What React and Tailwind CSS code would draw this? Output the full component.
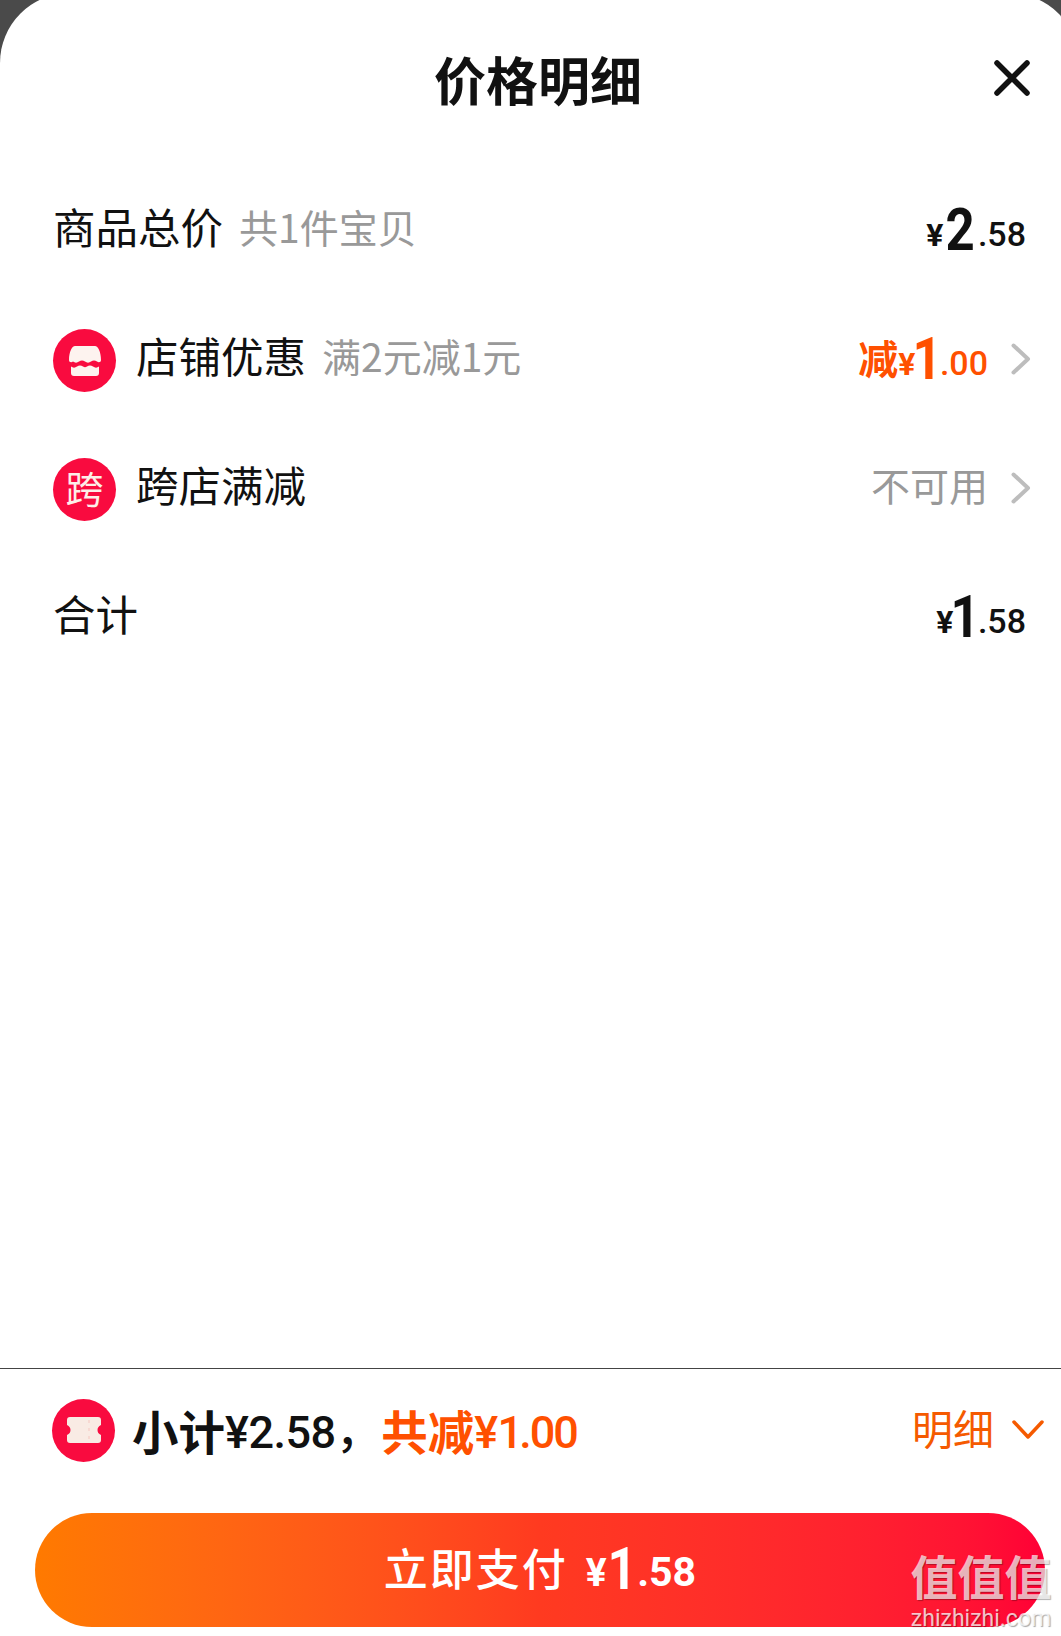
import React from "react";

const CJK = "font-['Noto_Sans_CJK_SC','Noto_Sans',sans-serif]";

// price like ¥2.58 with the big integer digit, small parts sit a bit above its baseline
const Price = ({ int, dec, color = "text-[#111]", tight = false }) => (
  <span className={`flex items-baseline font-['Roboto',sans-serif] leading-none pb-[3px] ${color}`}>
    <span className="text-[32px] font-bold -translate-y-[4px]">¥</span>
    <span className={`text-[60px] font-bold inline-block scale-x-[0.85] ${tight ? "-mx-[5px]" : "mx-0"}`}>{int}</span>
    <span className="text-[34px] font-medium -translate-y-[4px]">.{dec}</span>
  </span>
);

const Chevron = () => (
  <svg width="20" height="32" viewBox="0 0 20 32" fill="none" className="ml-[23px] -mr-[5px] mb-[3px] shrink-0">
    <path d="M2.5 2.5 L17 16 L2.5 29.5" stroke="#bdbdbd" strokeWidth="4" strokeLinecap="round" strokeLinejoin="round" />
  </svg>
);

const StoreIcon = () => (
  <div className="w-[63px] h-[63px] rounded-full bg-[#f90b3f] flex items-center justify-center shrink-0">
    <svg width="32" height="30" viewBox="0 0 32 30" fill="none">
      <path d="M6 0 H26 C29 0 32 6 32 14 C32 16 30 17 28 15.6 C26 14 24 14 22 15.6 C20 17 18 17 16 15.6 C14 14 12 14 10 15.6 C8 17 6 17 4 15.6 C2 17 0 16 0 14 C0 6 3 0 6 0 Z" fill="#fdf3ef" />
      <path d="M2 20.5 C4 22 6 22 8 20.5 C10 19 12 19 14 20.5 C15.5 21.6 16.5 21.6 18 20.5 C20 19 22 19 24 20.5 C26 22 28 22 30 20.5 V27 C30 29 29 30 27 30 H5 C3 30 2 29 2 27 Z" fill="#fdf3ef" />
    </svg>
  </div>
);

const TicketIcon = () => (
  <div className="w-[63px] h-[63px] rounded-full bg-[#f90b3f] flex items-center justify-center shrink-0">
    <svg width="34" height="26" viewBox="0 0 34 26" fill="none">
      <path d="M3 0 H31 C33 0 34 1 34 3 V8 C31.5 9 30.5 11 30.5 13 C30.5 15 31.5 17 34 18 V23 C34 25 33 26 31 26 H3 C1 26 0 25 0 23 V18 C2.5 17 3.5 15 3.5 13 C3.5 11 2.5 9 0 8 V3 C0 1 1 0 3 0 Z" fill="#f9ebe4" />
      <path d="M22 3 V23" stroke="#f6d3cb" strokeWidth="1.5" strokeDasharray="3 5" />
    </svg>
  </div>
);

const Row = ({ children }) => (
  <div className="flex items-center justify-between h-[129px]">{children}</div>
);

export default function App() {
  return (
    <div className={`h-[1636px] w-[1061px] bg-[#4a4a4a] overflow-hidden relative ${CJK}`}>
      <div className="w-[1079px] h-[1643px] -mt-[7px] bg-white rounded-t-[70px] flex flex-col">
        <div className="w-[1061px] flex flex-col flex-1">
          {/* Header */}
          <div className="relative h-[174px] pt-[7px] pl-[15px] flex items-center justify-center">
            <h1 className="text-[52px] font-bold text-[#111] leading-none pb-[10px]">价格明细</h1>
            <button className="absolute right-[31px] top-[67px]">
              <svg width="36" height="36" viewBox="0 0 36 36" fill="none">
                <path d="M3 3 L33 33 M33 3 L3 33" stroke="#111" strokeWidth="5.5" strokeLinecap="round" />
              </svg>
            </button>
          </div>

          {/* Rows */}
          <div className="flex flex-col pl-[53px] pr-[35px]">
            <Row>
              <div className="flex items-center">
                <span className="text-[42.5px] text-[#111] leading-none pb-[10px]">商品总价</span>
                <span className="text-[39px] text-[#999] leading-none ml-[16px] pb-[10px]">共1件宝贝</span>
              </div>
              <Price int="2" dec="58" />
            </Row>
            <Row>
              <div className="flex items-center">
                <StoreIcon />
                <span className="text-[42.5px] text-[#111] leading-none ml-[20px] pb-[10px]">店铺优惠</span>
                <span className="text-[39px] text-[#999] leading-none ml-[16px] pb-[10px]">满2元减1元</span>
              </div>
              <div className="flex items-center">
                <span className="text-[40px] font-bold text-[#ff5000] leading-none pb-[8px]">减</span>
                <Price int="1" dec="00" color="text-[#ff5000]" tight />
                <Chevron />
              </div>
            </Row>
            <Row>
              <div className="flex items-center">
                <div className="w-[63px] h-[63px] rounded-full bg-[#f90b3f] flex items-center justify-center shrink-0">
                  <span className="text-[38px] text-[#fdeee8] leading-none pb-[6px]">跨</span>
                </div>
                <span className="text-[42.5px] text-[#111] leading-none ml-[20px] pb-[10px]">跨店满减</span>
              </div>
              <div className="flex items-center">
                <span className="text-[39px] text-[#999] leading-none pb-[10px]">不可用</span>
                <Chevron />
              </div>
            </Row>
            <Row>
              <span className="text-[42.5px] text-[#111] leading-none pb-[10px]">合计</span>
              <Price int="1" dec="58" tight />
            </Row>
          </div>

          {/* Footer */}
          <div className="mt-auto border-t border-[#444] h-[268px] flex flex-col">
            <div className="flex items-center justify-between pl-[52px] pr-[16px] h-[122px]">
              <div className="flex items-center">
                <TicketIcon />
                <span className="ml-[17px] text-[46.5px] font-bold text-[#111] leading-none">小计</span>
                <span className="text-[45px] font-medium font-['Roboto','Noto_Sans_CJK_SC',sans-serif] text-[#111] leading-none tracking-[-0.5px] pt-[4px]">¥2.58，</span>
                <span className="ml-[1px] text-[46.5px] font-bold text-[#ff5000] leading-none">共减</span>
                <span className="text-[45px] font-medium font-['Roboto',sans-serif] text-[#ff5000] leading-none tracking-[-0.5px] pt-[4px]">¥<span className="tracking-[-7px]">1</span><span className="ml-[3px] tracking-[-2px]">.00</span></span>
              </div>
              <div className="flex items-center">
                <span className="text-[41px] text-[#f55a00] leading-none pb-[6px]">明细</span>
                <svg width="34" height="22" viewBox="0 0 34 22" fill="none" className="ml-[17px]">
                  <path d="M3 3 L17 18 L31 3" stroke="#f55a00" strokeWidth="3.5" strokeLinecap="round" strokeLinejoin="round" />
                </svg>
              </div>
            </div>
            <div className="pl-[35px] pr-[16px] mt-[22px]">
              <button className="w-full h-[114px] rounded-full bg-gradient-to-r from-[#ff7a00] via-[#ff3a20] to-[#ff0036] text-white flex items-center justify-center">
                <span className="text-[44px] font-medium leading-none tracking-[2px] mr-[18px] pb-[6px]">立即支付</span>
                <span className="flex items-baseline font-['Roboto',sans-serif] font-bold leading-none pb-[3px]">
                  <span className="text-[39px] -translate-y-[3px]">¥</span>
                  <span className="text-[60px] inline-block scale-x-[0.85] -mx-[2px]">1</span>
                  <span className="text-[41px] -translate-y-[3px]">.58</span>
                </span>
              </button>
            </div>
          </div>
        </div>
      </div>

      {/* Watermark */}
      <div className="absolute left-[908px] top-[1551px] w-[146px] text-center">
        <div className="text-[47px] font-bold leading-none text-white/70 [text-shadow:1px_1px_1px_rgba(0,0,0,0.3)]">值值值</div>
        <div className="text-[23px] font-['Roboto',sans-serif] leading-none mt-[9px] text-white/75 [text-shadow:1px_1px_1px_rgba(0,0,0,0.35)]">zhizhizhi.com</div>
      </div>
    </div>
  );
}
